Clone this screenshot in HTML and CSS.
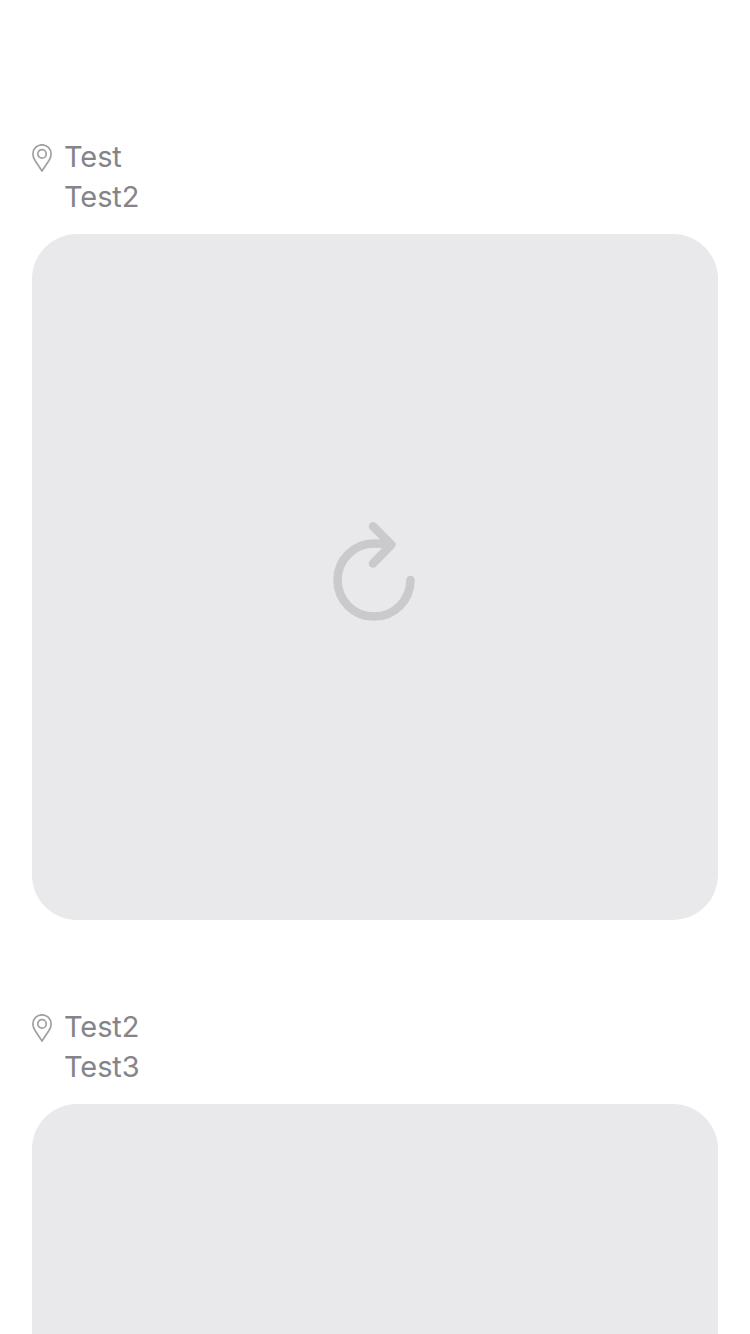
FILE: index.html
```html
<!DOCTYPE html>
<html lang="en">
<head>
<meta charset="utf-8">
<title>Places</title>
<link rel="stylesheet" href="styles.css">
</head>
<body>
<main class="feed">
  <article class="post">
    <header class="place">
      <svg class="pin" viewBox="0 0 20 28"><path d="M10 27L3.2 16.8C1.6 14.2 .9 12.3 .9 9.9a9.1 9.1 0 0 1 18.2 0C19.1 12.3 18.4 14.2 16.8 16.8Z"/><circle cx="10" cy="9.9" r="4.2"/></svg>
      <div class="lines"><span>Test</span><span>Test2</span></div>
    </header>
    <div class="photo">
      <svg class="reload" viewBox="0 0 84 100"><path d="M78.5 58.1A36.5 36.5 0 1 1 42 21.6Q51 21.6 59.3 22.8M41 4.2L59.3 22.8L41 41.5"/></svg>
    </div>
  </article>
  <article class="post post-cut">
    <header class="place">
      <svg class="pin" viewBox="0 0 20 28"><path d="M10 27L3.2 16.8C1.6 14.2 .9 12.3 .9 9.9a9.1 9.1 0 0 1 18.2 0C19.1 12.3 18.4 14.2 16.8 16.8Z"/><circle cx="10" cy="9.9" r="4.2"/></svg>
      <div class="lines"><span>Test2</span><span>Test3</span></div>
    </header>
    <div class="photo"></div>
  </article>
</main>
</body>
</html>
```
FILE: styles.css
```css
* { box-sizing: border-box; }
body { margin: 0; background: #fff; font-family: Inter, "Liberation Sans", sans-serif; }
.feed { display: flex; flex-direction: column; gap: 87px; height: 1334px; padding: 137px 32px 0; overflow: hidden; }
.post { flex: none; }
.place { display: flex; gap: 12px; height: 97px; }
.pin { width: 20px; height: 28px; margin-top: 7px; fill: none; stroke: #a0a0a2; stroke-width: 1.7; }
.lines { display: flex; flex-direction: column; color: #858589; font-size: 29px; line-height: 40px; letter-spacing: -0.1px; }
.photo { display: flex; align-items: center; justify-content: center; height: 686px; border-radius: 45px; background: #e9e9eb; }
.reload { width: 84px; height: 100px; margin: 0 2px 10px 0; fill: none; stroke: #cacacc; stroke-width: 8.5; stroke-linecap: round; stroke-linejoin: round; }
/* The last post continues below the fold */
.post-cut { flex: 1; display: flex; flex-direction: column; min-height: 0; }
.post-cut .photo { flex: 1; height: auto; border-radius: 45px 45px 0 0; }
```
